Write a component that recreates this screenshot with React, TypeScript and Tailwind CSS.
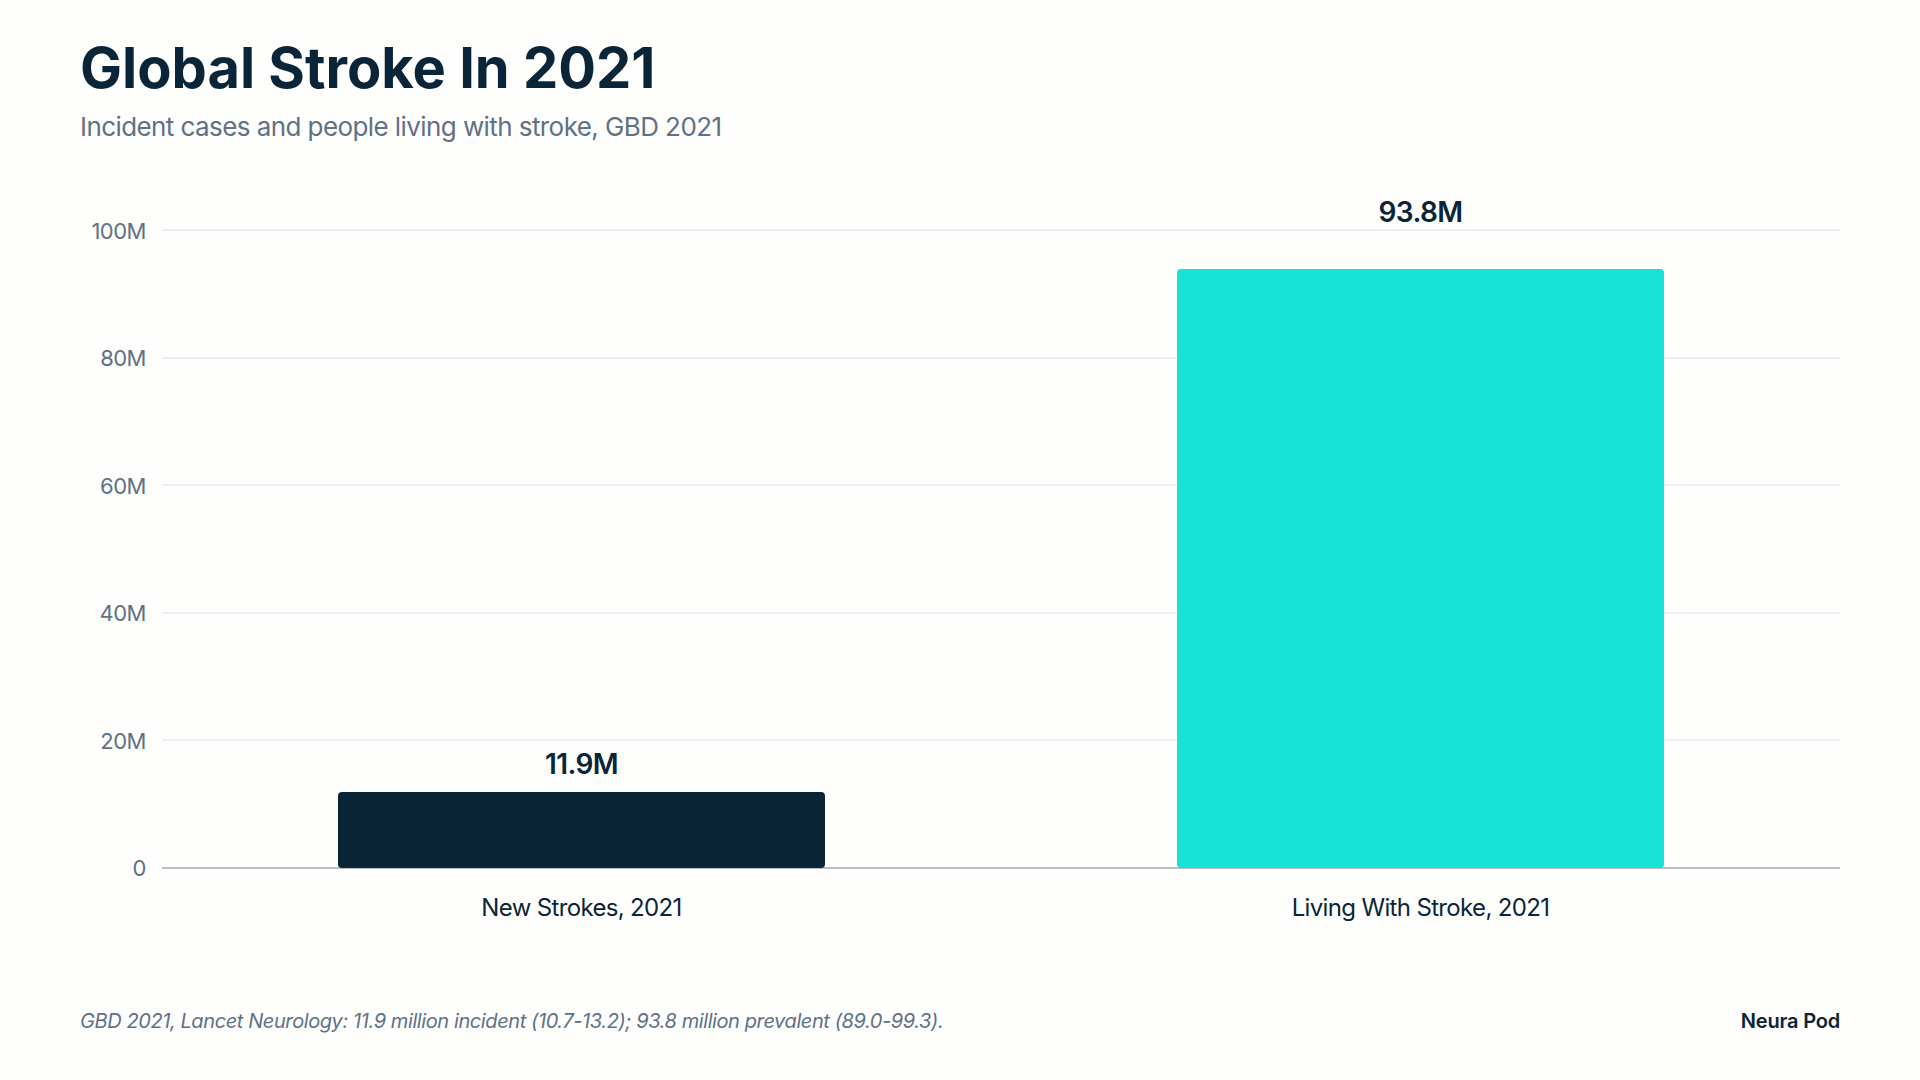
const ticks = ["100M", "80M", "60M", "40M", "20M", "0"];

const bars = [
  { name: "New Strokes, 2021", value: "11.9M", bar: "h-[76px] bg-[#0a2538]", gap: "mb-[11px]" },
  { name: "Living With Stroke, 2021", value: "93.8M", bar: "h-[599px] bg-[#16e2d6]", gap: "mb-[40px]" },
];

export default function App() {
  return (
    <div className="w-[1920px] h-[1080px] bg-[#fefefd] px-20 pt-[36px] font-['Inter',sans-serif] text-[#0a2538] overflow-hidden">
      <h1 className="text-[56px] leading-[64px] font-bold">Global Stroke In 2021</h1>
      <p className="mt-[11px] text-[26px] leading-[32px] tracking-[-0.58px] text-[#5f7185]">
        Incident cases and people living with stroke, GBD 2021
      </p>

      <div className="mt-[87px] flex gap-4">
        <div className="w-[66px] h-[638px] flex flex-col justify-between items-end text-[22px] tracking-[-0.5px] text-[#5f7185]">
          {ticks.map((t) => (
            <div key={t} className="h-0 flex items-center translate-y-px">{t}</div>
          ))}
        </div>
        <div className="flex-1">
          <div className="relative h-[638px]">
            <div className="absolute inset-0 flex flex-col justify-between">
              {ticks.map((t) => (
                <div key={t} className={t === "0" ? "h-0.5 -my-px bg-[#b8c0c6]" : "h-0.5 -my-px bg-[#eef0f0]"} />
              ))}
            </div>
            <div className="absolute inset-0 flex">
              {bars.map((b) => (
                <div key={b.name} className="flex-1 flex flex-col justify-end items-center">
                  <div className={`shrink-0 text-[28px] leading-[34px] font-semibold tracking-[-0.6px] ${b.gap}`}>{b.value}</div>
                  <div className={`shrink-0 w-[487px] rounded-[4px] ${b.bar}`} />
                </div>
              ))}
            </div>
          </div>
          <div className="flex mt-[24px]">
            {bars.map((b) => (
              <div key={b.name} className="flex-1 text-center text-[24px] leading-[32px] tracking-[-0.65px]">{b.name}</div>
            ))}
          </div>
        </div>
      </div>

      <div className="mt-[82px] flex justify-between items-baseline">
        <div className="text-[20px] leading-[30px] italic tracking-[-0.41px] text-[#5f7185]">
          GBD 2021, Lancet Neurology: 11.9 million incident (10.7-13.2); 93.8 million prevalent (89.0-99.3).
        </div>
        <div className="text-[20px] font-semibold tracking-[-0.2px]">Neura Pod</div>
      </div>
    </div>
  );
}
